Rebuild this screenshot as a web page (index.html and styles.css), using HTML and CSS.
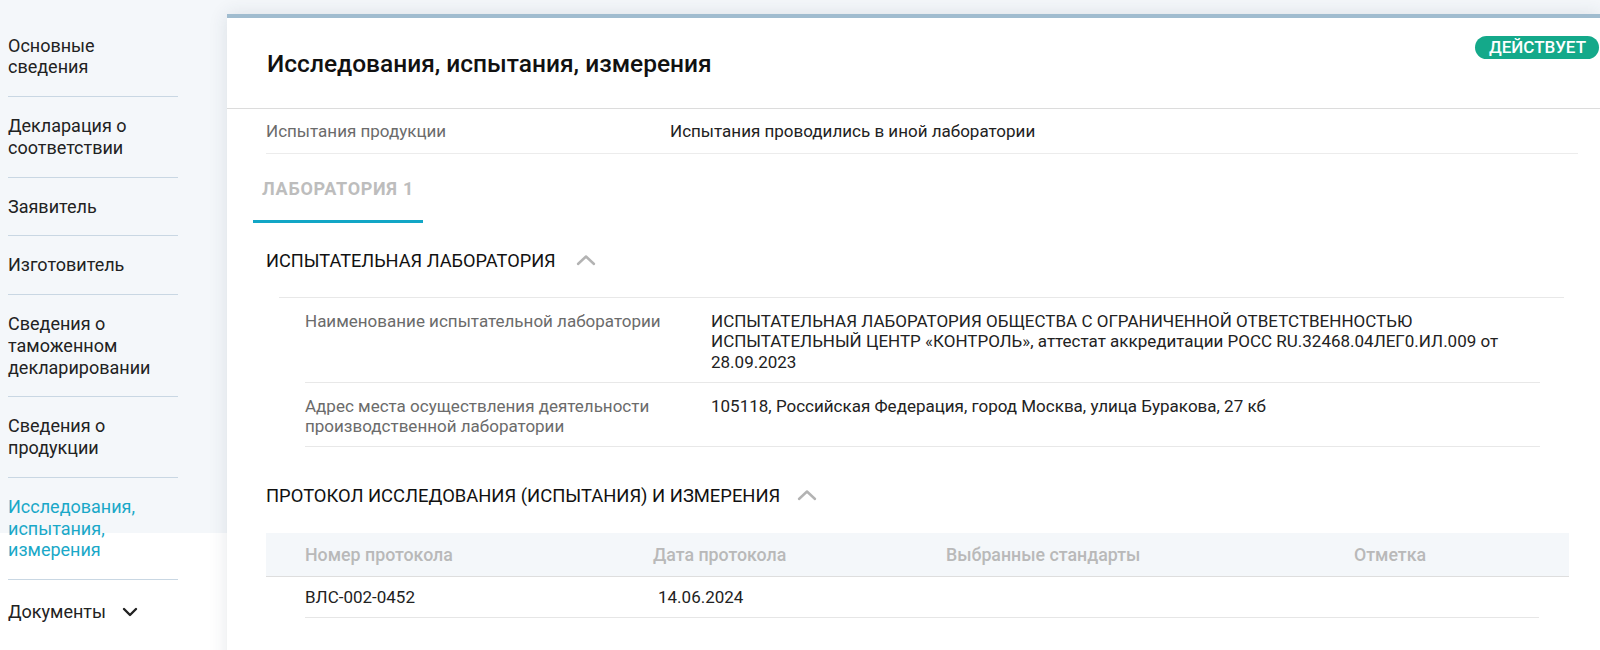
FILE: index.html
```html
<!DOCTYPE html>
<html lang="ru">
<head>
<meta charset="utf-8">
<title>Исследования, испытания, измерения</title>
<link rel="stylesheet" href="styles.css">
</head>
<body>
<div class="page">
  <nav class="sidebar">
    <div class="nav-item">Основные сведения</div>
    <div class="nav-item">Декларация о соответствии</div>
    <div class="nav-item">Заявитель</div>
    <div class="nav-item">Изготовитель</div>
    <div class="nav-item">Сведения о таможенном декларировании</div>
    <div class="nav-item">Сведения о продукции</div>
    <div class="nav-item active">Исследования, испытания, измерения</div>
    <div class="nav-item last">Документы
      <svg class="chev-down" width="16" height="10" viewBox="0 0 16 10"><polyline points="2,2 8,8 14,2" fill="none" stroke="#222" stroke-width="2.4" stroke-linecap="round" stroke-linejoin="round"/></svg>
    </div>
  </nav>
  <main class="card">
    <header class="card-head">
      <h1 class="title">Исследования, испытания, измерения</h1>
      <span class="badge">ДЕЙСТВУЕТ</span>
    </header>
    <div class="card-body">
      <div class="field-row">
        <div class="field-label">Испытания продукции</div>
        <div class="field-value">Испытания проводились в иной лаборатории</div>
      </div>
      <div class="tabs">
        <div class="tab">ЛАБОРАТОРИЯ 1</div>
      </div>
      <div class="section-head">
        <span>ИСПЫТАТЕЛЬНАЯ ЛАБОРАТОРИЯ</span>
        <svg class="chev-up" width="20" height="12" viewBox="0 0 20 12"><polyline points="2,10 10,2.5 18,10" fill="none" stroke="#b3b3b3" stroke-width="2.4" stroke-linecap="round" stroke-linejoin="round"/></svg>
      </div>
      <div class="lab-table">
        <div class="lab-row">
          <div class="lab-label">Наименование испытательной лаборатории</div>
          <div class="lab-value">ИСПЫТАТЕЛЬНАЯ ЛАБОРАТОРИЯ ОБЩЕСТВА С ОГРАНИЧЕННОЙ ОТВЕТСТВЕННОСТЬЮ ИСПЫТАТЕЛЬНЫЙ ЦЕНТР «КОНТРОЛЬ», аттестат аккредитации РОСС RU.32468.04ЛЕГ0.ИЛ.009 от 28.09.2023</div>
        </div>
        <div class="lab-row">
          <div class="lab-label">Адрес места осуществления деятельности производственной лаборатории</div>
          <div class="lab-value">105118, Российская Федерация, город Москва, улица Буракова, 27 кб</div>
        </div>
      </div>
      <div class="section-head protocol">
        <span>ПРОТОКОЛ ИССЛЕДОВАНИЯ (ИСПЫТАНИЯ) И ИЗМЕРЕНИЯ</span>
        <svg class="chev-up" width="20" height="12" viewBox="0 0 20 12"><polyline points="2,10 10,2.5 18,10" fill="none" stroke="#b3b3b3" stroke-width="2.4" stroke-linecap="round" stroke-linejoin="round"/></svg>
      </div>
      <div class="proto-table">
        <div class="proto-head">
          <div>Номер протокола</div>
          <div>Дата протокола</div>
          <div>Выбранные стандарты</div>
          <div>Отметка</div>
        </div>
        <div class="proto-row">
          <div>ВЛС-002-0452</div>
          <div class="date">14.06.2024</div>
          <div></div>
          <div></div>
        </div>
      </div>
    </div>
  </main>
</div>
</body>
</html>
```
FILE: styles.css
```css
* { box-sizing: border-box; }
html, body { margin: 0; padding: 0; }
body {
  font-family: Roboto, "Noto Sans", "Liberation Sans", sans-serif;
  color: #222;
  background: linear-gradient(to bottom, #f4f7fa 0, #f4f7fa 533px, #ffffff 533px);
  height: 650px;
  overflow: hidden;
}
.page {
  display: flex;
  align-items: flex-start;
}
.sidebar {
  width: 227px;
  flex: 0 0 227px;
  padding: 16.5px 49px 0 8px;
}
.nav-item {
  font-size: 18px;
  line-height: 21.75px;
  padding: 18px 0;
  border-bottom: 1px solid #c9d7e3;
  color: #222;
}
.nav-item.active { color: #1aa8c8; }
.nav-item.last {
  border-bottom: none;
  padding-top: 21px;
  display: flex;
  align-items: center;
  gap: 16px;
}
.chev-down { display: block; }
.card {
  flex: 1;
  margin-top: 14px;
  background: #fff;
  border-top: 4px solid #a0bccf;
  box-shadow: 0 0 18px rgba(40, 60, 80, 0.12);
  min-height: 700px;
}
.card-head {
  display: flex;
  justify-content: space-between;
  align-items: flex-start;
  padding: 0 1px 0 40px;
  border-bottom: 1px solid #dcdcdc;
}
.title {
  margin: 0;
  padding: 32px 0 30px;
  font-size: 24.5px;
  line-height: 28px;
  font-weight: 500;
  color: #111;
}
.badge {
  margin-top: 18px;
  height: 23px;
  line-height: 23px;
  padding: 0 13px 0 14px;
  border-radius: 12px;
  background: #14a98a;
  color: #fff;
  font-size: 17px;
  font-weight: 500;
}
.card-body {
  padding: 0 22px 0 39px;
}
.field-row {
  display: flex;
  padding: 11px 0 10px;
  border-bottom: 1px solid #ececec;
  font-size: 17px;
  line-height: 23px;
}
.field-label { width: 404px; flex: 0 0 404px; color: #6b6b6b; }
.field-value { flex: 1; color: #222; }
.tabs {
  display: flex;
  margin-left: -13px;
}
.tab {
  width: 170px;
  text-align: center;
  padding: 22.5px 0 20.5px;
  border-bottom: 3px solid #12a6c6;
  font-size: 18px;
  line-height: 23px;
  font-weight: 700;
  letter-spacing: 0.7px;
  color: #bdbdbd;
}
.section-head {
  display: flex;
  align-items: center;
  gap: 20px;
  margin: 25.5px 0;
  font-size: 18.2px;
  line-height: 23px;
  color: #111;
}
.section-head.protocol {
  margin-top: 36.5px;
  margin-bottom: 26.5px;
  font-size: 18.4px;
  gap: 17px;
}
.chev-up { display: block; }
.lab-table {
  margin: 0 14px 0 13px;
  border-top: 1px solid #e8e8e8;
}
.lab-row {
  display: flex;
  margin: 0 24px 0 26px;
  padding: 13px 0 10px;
  border-bottom: 1px solid #e8e8e8;
  font-size: 17px;
  line-height: 20.25px;
}
.lab-label { width: 406px; flex: 0 0 406px; padding-right: 40px; color: #6b6b6b; }
.lab-value { flex: 1; color: #222; }
.proto-table {
  margin-right: 9px;
}
.proto-head {
  display: grid;
  grid-template-columns: 348px 293px 408px 1fr;
  padding: 10px 0 10px 39px;
  background: #f4f7fa;
  border-bottom: 1px solid #dedede;
  font-size: 17.8px;
  line-height: 23px;
  font-weight: 500;
  color: #b9b9b9;
}
.proto-row {
  display: grid;
  grid-template-columns: 348px 293px 408px 1fr;
  margin: 0 30px 0 39px;
  padding: 9px 0 8px;
  border-bottom: 1px solid #e6e6e6;
  font-size: 17px;
  line-height: 23px;
  color: #222;
}
.proto-row .date { padding-left: 5px; }
```
